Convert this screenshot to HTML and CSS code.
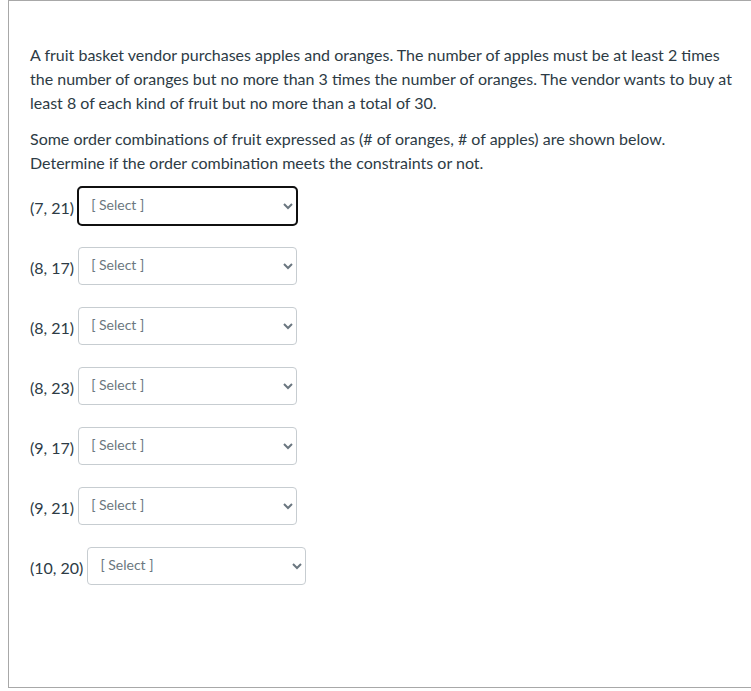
FILE: index.html
```html
<!DOCTYPE html>
<html>
<head>
<meta charset="utf-8">
<link rel="stylesheet" href="styles.css">
</head>
<body>
<div class="question">
  <p>A fruit basket vendor purchases apples and oranges. The number of apples must be at least 2 times the number of oranges but no more than 3 times the number of oranges. The vendor wants to buy at least 8 of each kind of fruit but no more than a total of 30.</p>
  <p>Some order combinations of fruit expressed as (# of oranges, # of apples) are shown below. Determine if the order combination meets the constraints or not.</p>
  <div class="answers">
    <div class="row"><span class="label">(7, 21)</span><select class="pick focused"><option>[ Select ]</option></select></div>
    <div class="row"><span class="label">(8, 17)</span><select class="pick"><option>[ Select ]</option></select></div>
    <div class="row"><span class="label">(8, 21)</span><select class="pick"><option>[ Select ]</option></select></div>
    <div class="row"><span class="label">(8, 23)</span><select class="pick"><option>[ Select ]</option></select></div>
    <div class="row"><span class="label">(9, 17)</span><select class="pick"><option>[ Select ]</option></select></div>
    <div class="row"><span class="label">(9, 21)</span><select class="pick"><option>[ Select ]</option></select></div>
    <div class="row"><span class="label">(10, 20)</span><select class="pick"><option>[ Select ]</option></select></div>
  </div>
</div>
</body>
</html>
```
FILE: styles.css
```css
html, body {
  margin: 0;
  padding: 0;
  background: #fff;
}
body {
  padding-left: 8px;
  font-family: Lato, "Noto Sans", sans-serif;
  color: #2d3b45;
  font-size: 16px;
  line-height: 24px;
  overflow: hidden;
}
.question {
  box-sizing: border-box;
  height: 688px;
  width: 760px;
  border: 1px solid #a8a8a8;
  padding: 30px 29px 0 21px;
}
.question p {
  margin: 12px 0 12px 0;
}
.answers {
  padding-top: 0;
}
.row {
  display: flex;
  align-items: flex-start;
  height: 38px;
  margin-bottom: 22px;
}
.label {
  padding-top: 9px;
  margin-right: 4px;
  white-space: nowrap;
}
.pick {
  box-sizing: border-box;
  width: 219px;
  height: 38px;
  border: 1px solid #c7cdd1;
  border-radius: 4px;
  background: #fff;
  color: #6b7780;
  font-family: Lato, "Noto Sans", sans-serif;
  font-size: 14px;
  padding: 0 10px 4px 8px;
}
.focused {
  outline: 2px solid #101010;
  outline-offset: -1px;
}
```
